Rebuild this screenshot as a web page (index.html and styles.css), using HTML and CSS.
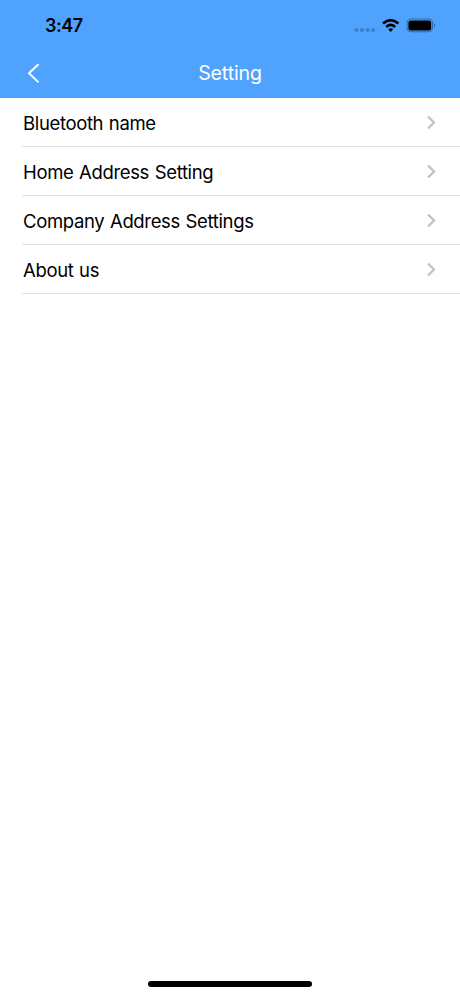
FILE: index.html
```html
<!DOCTYPE html>
<html lang="en">
<head>
<meta charset="utf-8">
<title>Setting</title>
<link rel="stylesheet" href="styles.css">
</head>
<body>
<header class="header">
  <div class="status">
    <span class="time">3:47</span>
    <svg class="indicators" width="84" height="20" viewBox="0 0 84 20">
      <g fill="#3a80cb"><circle cx="3.400" cy="14" r="2"/><circle cx="9" cy="14" r="2"/><circle cx="14.600" cy="14" r="2"/><circle cx="20.200" cy="14" r="2"/></g>
      <g fill="none" stroke="#000" stroke-width="2.600"><path d="M30 7.400Q37.700 .8 45.400 7.400"/><path d="M33.200 10.900Q37.700 7 42.200 10.900"/></g>
      <path d="M37.700 15.900L35.200 13.300Q37.700 11.400 40.200 13.300Z"/>
      <rect x="54" y="3" width="25.600" height="12.800" rx="3.800" fill="none" stroke="#2f68a6"/>
      <rect x="55.400" y="4.400" width="22.800" height="10" rx="2.500"/>
      <path d="M81 7.400Q83.400 9.400 81 11.400Z" fill="#2f68a6"/>
    </svg>
  </div>
  <div class="navbar">
    <svg class="back" width="14" height="22" viewBox="0 0 14 22"><path d="M12.500 1.200L3 10.300L12.500 19.400"/></svg>
    <h1 class="title">Setting</h1>
  </div>
</header>
<main class="list">
  <div class="row"><span class="label">Bluetooth name</span><svg class="chevron" width="10" height="16" viewBox="0 0 10 16"><path d="M2 1.500L8 7.500L2 13.500"/></svg></div>
  <div class="row"><span class="label">Home Address Setting</span><svg class="chevron" width="10" height="16" viewBox="0 0 10 16"><path d="M2 1.500L8 7.500L2 13.500"/></svg></div>
  <div class="row"><span class="label">Company Address Settings</span><svg class="chevron" width="10" height="16" viewBox="0 0 10 16"><path d="M2 1.500L8 7.500L2 13.500"/></svg></div>
  <div class="row"><span class="label">About us</span><svg class="chevron" width="10" height="16" viewBox="0 0 10 16"><path d="M2 1.500L8 7.500L2 13.500"/></svg></div>
</main>
<div class="home"></div>
</body>
</html>
```
FILE: styles.css
```css
* { box-sizing: border-box; }
body { margin: 0; height: 996px; display: flex; flex-direction: column; background: #fff; font-family: Inter, sans-serif; color: #000; overflow: hidden; }
.header { height: 98px; background: #4fa3ff; }
.status { height: 49px; padding: 16px 23px 0 45px; display: flex; justify-content: space-between; align-items: flex-start; }
.time { font-size: 18px; line-height: 20px; font-weight: 600; letter-spacing: -0.5px; }
.navbar { height: 49px; display: grid; grid-template-columns: 60px 1fr 60px; align-items: center; }
.back { margin-left: 26px; fill: none; stroke: #fff; stroke-width: 2; }
.title { margin: 0 0 2px; text-align: center; color: #fff; font-size: 19.500px; line-height: 24px; font-weight: 400; letter-spacing: -0.100px; }
.list { flex: 1; padding-left: 22px; }
.row { height: 49px; display: flex; align-items: center; justify-content: space-between; padding: 0 24px 0 1px; border-bottom: 1px solid #e2e2e2; }
.label { margin-top: 2px; font-size: 18.500px; line-height: 24px; letter-spacing: -0.350px; word-spacing: 0.800px; white-space: nowrap; }
.chevron { margin-top: 2px; fill: none; stroke: #c0c0c2; stroke-width: 2.200; }
.home { width: 164px; height: 6px; margin: 0 auto 9px; border-radius: 3px; background: #000; }
```
